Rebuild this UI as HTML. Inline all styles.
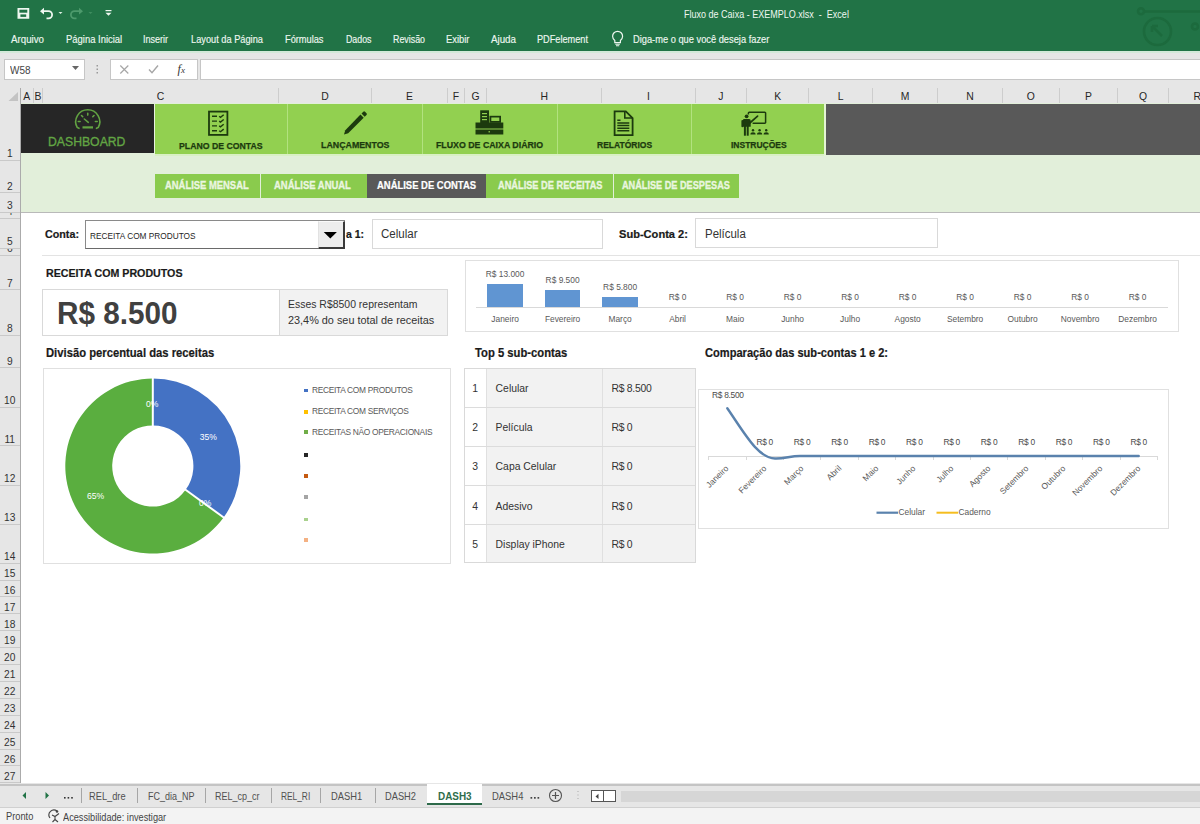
<!DOCTYPE html><html><head><meta charset="utf-8"><style>
*{margin:0;padding:0;box-sizing:border-box}
html,body{width:1200px;height:824px;overflow:hidden;background:#fff;font-family:"Liberation Sans",sans-serif}
.a{position:absolute}
.t{position:absolute;white-space:nowrap;line-height:1}
.b{font-weight:bold}
</style></head><body>
<div class="a" style="left:0px;top:0px;width:1200px;height:51px;background:#217346"></div>
<div class="a" style="left:0px;top:51px;width:1200px;height:2px;background:#d3e9d9"></div>
<svg class="a" style="left:0;top:0" width="130" height="30" viewBox="0 0 130 30">
<rect x="17.5" y="8" width="11.75" height="10.75" fill="#eef7f0"/><rect x="19.4" y="9.7" width="7.9" height="3" fill="#217346"/><rect x="20.4" y="14.4" width="5.8" height="2.5" fill="#217346"/>
<path d="M42 11.2h6.5a3.6 3.6 0 0 1 0 7.2h-2" fill="none" stroke="#eef7f0" stroke-width="1.8"/>
<path d="M40 11.2l4-3.4v6.8z" fill="#eef7f0"/>
<path d="M58.5 12l2 2 2-2z" fill="#dcefe2"/>
<path d="M81 11.2h-6.5a3.6 3.6 0 0 0 0 7.2h2" fill="none" stroke="#4d9a6c" stroke-width="1.8"/>
<path d="M83 11.2l-4-3.4v6.8z" fill="#4d9a6c"/>
<path d="M88.5 12l2 2 2-2z" fill="#3f8d5f"/>
<path d="M105.5 10.6h6" stroke="#eef7f0" stroke-width="1.2"/>
<path d="M105.5 12.8h6l-3 3z" fill="#eef7f0"/>
</svg>
<div class="t" style="left:684.00px;top:10.00px;font-size:10.32px;color:#eef7f0;transform:scaleX(0.8745);transform-origin:0 0;">Fluxo de Caixa - EXEMPLO.xlsx&nbsp; -&nbsp; Excel</div>
<svg class="a" style="left:1120px;top:0" width="80" height="51" viewBox="1120 0 80 51">
<g fill="none" stroke="#1c6a3d" stroke-width="2.6">
<circle cx="1157.5" cy="31.5" r="13.5"/>
<circle cx="1141" cy="11.3" r="3"/>
<path d="M1144 11.5H1200"/>
<circle cx="1195" cy="26.5" r="3"/>
<path d="M1152 26l10 10M1152 26h6M1152 26v6"/>
</g></svg>
<div class="t" style="left:10.70px;top:35.00px;font-size:10.32px;color:#eef7f0;transform:scaleX(0.9430);transform-origin:0 0;-webkit-text-stroke:0.15px">Arquivo</div>
<div class="t" style="left:65.50px;top:35.00px;font-size:10.32px;color:#eef7f0;transform:scaleX(0.9164);transform-origin:0 0;-webkit-text-stroke:0.15px">Página Inicial</div>
<div class="t" style="left:143.00px;top:35.00px;font-size:10.32px;color:#eef7f0;transform:scaleX(0.8720);transform-origin:0 0;-webkit-text-stroke:0.15px">Inserir</div>
<div class="t" style="left:190.50px;top:35.00px;font-size:10.32px;color:#eef7f0;transform:scaleX(0.8962);transform-origin:0 0;-webkit-text-stroke:0.15px">Layout da Página</div>
<div class="t" style="left:284.50px;top:35.00px;font-size:10.32px;color:#eef7f0;transform:scaleX(0.8951);transform-origin:0 0;-webkit-text-stroke:0.15px">Fórmulas</div>
<div class="t" style="left:345.50px;top:35.00px;font-size:10.32px;color:#eef7f0;transform:scaleX(0.8547);transform-origin:0 0;-webkit-text-stroke:0.15px">Dados</div>
<div class="t" style="left:393.00px;top:35.00px;font-size:10.32px;color:#eef7f0;transform:scaleX(0.8582);transform-origin:0 0;-webkit-text-stroke:0.15px">Revisão</div>
<div class="t" style="left:446.00px;top:35.00px;font-size:10.32px;color:#eef7f0;transform:scaleX(0.9105);transform-origin:0 0;-webkit-text-stroke:0.15px">Exibir</div>
<div class="t" style="left:491.00px;top:35.00px;font-size:10.32px;color:#eef7f0;transform:scaleX(0.9470);transform-origin:0 0;-webkit-text-stroke:0.15px">Ajuda</div>
<div class="t" style="left:537.30px;top:35.00px;font-size:10.32px;color:#eef7f0;transform:scaleX(0.8892);transform-origin:0 0;-webkit-text-stroke:0.15px">PDFelement</div>
<div class="t" style="left:632.60px;top:35.00px;font-size:10.32px;color:#eef7f0;transform:scaleX(0.9007);transform-origin:0 0;-webkit-text-stroke:0.15px">Diga-me o que você deseja fazer</div>
<svg class="a" style="left:608px;top:30px" width="20" height="18" viewBox="0 0 20 18">
<path d="M6.8 10.5c-1.4-1.2-2.2-2.6-2.2-4.2a5 5 0 0 1 10 0c0 1.6-.8 3-2.2 4.2v2.2h-5.6z" fill="none" stroke="#eef7f0" stroke-width="1.2"/>
<path d="M7.3 14.3h4.6M8 15.8h3.2" stroke="#eef7f0" stroke-width="1.1"/>
</svg>
<div class="a" style="left:0px;top:53px;width:1200px;height:35px;background:#e6e6e6"></div>
<div class="a" style="left:4px;top:58.9px;width:81px;height:21px;background:#fff;border:1px solid #c6c6c6"></div>
<div class="t" style="left:10.00px;top:65.00px;font-size:10.76px;color:#444;transform:scaleX(0.9270);transform-origin:0 0;">W58</div>
<svg class="a" style="left:72px;top:66px" width="8" height="5"><path d="M0 0h7l-3.5 4z" fill="#666"/></svg>
<svg class="a" style="left:95px;top:64px" width="5" height="11"><g fill="#9a9a9a"><rect x="1.5" y="1" width="1.5" height="1.5"/><rect x="1.5" y="4.5" width="1.5" height="1.5"/><rect x="1.5" y="8" width="1.5" height="1.5"/></g></svg>
<div class="a" style="left:109.5px;top:58.9px;width:88px;height:21px;background:#fff;border:1px solid #c6c6c6"></div>
<svg class="a" style="left:110px;top:60px" width="88" height="20" viewBox="110 60 88 20">
<path d="M120.3 65.5l8 8M128.3 65.5l-8 8" stroke="#a6a6a6" stroke-width="1.2"/>
<path d="M149 69.5l3 3.3 6-7.3" fill="none" stroke="#a6a6a6" stroke-width="1.4"/>
</svg>
<div class="t" style="left:177.60px;top:63.00px;font-size:12px;color:#333;font-family:'Liberation Serif',serif"><i>f</i><span style="font-size:9px"><i>x</i></span></div>
<div class="a" style="left:199.5px;top:58.9px;width:1001px;height:21px;background:#fff;border:1px solid #c6c6c6;border-right:none"></div>
<div class="a" style="left:0px;top:88px;width:1200px;height:15px;background:#e6e6e6"></div>
<div class="a" style="left:0px;top:102.8px;width:1200px;height:1px;background:#b0b0b0"></div>
<svg class="a" style="left:0;top:88px" width="20" height="15"><path d="M18 13V4L8.5 13z" fill="#c3c3c3"/></svg>
<div class="a" style="left:19.5px;top:88px;width:1px;height:15px;background:#ababab"></div>
<div class="a" style="left:33.1px;top:88px;width:1px;height:15px;background:#cdcdcd"></div>
<div class="t" style="left:-173.20px;width:400px;text-align:center;top:92.00px;font-size:10.4px;color:#262626;">A</div>
<div class="a" style="left:42.0px;top:88px;width:1px;height:15px;background:#cdcdcd"></div>
<div class="t" style="left:-161.95px;width:400px;text-align:center;top:92.00px;font-size:10.4px;color:#262626;">B</div>
<div class="a" style="left:278.0px;top:88px;width:1px;height:15px;background:#cdcdcd"></div>
<div class="t" style="left:-39.50px;width:400px;text-align:center;top:92.00px;font-size:10.4px;color:#262626;">C</div>
<div class="a" style="left:371.0px;top:88px;width:1px;height:15px;background:#cdcdcd"></div>
<div class="t" style="left:125.00px;width:400px;text-align:center;top:92.00px;font-size:10.4px;color:#262626;">D</div>
<div class="a" style="left:447.0px;top:88px;width:1px;height:15px;background:#cdcdcd"></div>
<div class="t" style="left:209.50px;width:400px;text-align:center;top:92.00px;font-size:10.4px;color:#262626;">E</div>
<div class="a" style="left:464.1px;top:88px;width:1px;height:15px;background:#cdcdcd"></div>
<div class="t" style="left:256.05px;width:400px;text-align:center;top:92.00px;font-size:10.4px;color:#262626;">F</div>
<div class="a" style="left:486.0px;top:88px;width:1px;height:15px;background:#cdcdcd"></div>
<div class="t" style="left:275.55px;width:400px;text-align:center;top:92.00px;font-size:10.4px;color:#262626;">G</div>
<div class="a" style="left:601.4px;top:88px;width:1px;height:15px;background:#cdcdcd"></div>
<div class="t" style="left:344.20px;width:400px;text-align:center;top:92.00px;font-size:10.4px;color:#262626;">H</div>
<div class="a" style="left:694.7px;top:88px;width:1px;height:15px;background:#cdcdcd"></div>
<div class="t" style="left:448.55px;width:400px;text-align:center;top:92.00px;font-size:10.4px;color:#262626;">I</div>
<div class="a" style="left:746.2px;top:88px;width:1px;height:15px;background:#cdcdcd"></div>
<div class="t" style="left:520.95px;width:400px;text-align:center;top:92.00px;font-size:10.4px;color:#262626;">J</div>
<div class="a" style="left:808.0px;top:88px;width:1px;height:15px;background:#cdcdcd"></div>
<div class="t" style="left:577.60px;width:400px;text-align:center;top:92.00px;font-size:10.4px;color:#262626;">K</div>
<div class="a" style="left:872.2px;top:88px;width:1px;height:15px;background:#cdcdcd"></div>
<div class="t" style="left:640.60px;width:400px;text-align:center;top:92.00px;font-size:10.4px;color:#262626;">L</div>
<div class="a" style="left:937.2px;top:88px;width:1px;height:15px;background:#cdcdcd"></div>
<div class="t" style="left:705.20px;width:400px;text-align:center;top:92.00px;font-size:10.4px;color:#262626;">M</div>
<div class="a" style="left:1002.0px;top:88px;width:1px;height:15px;background:#cdcdcd"></div>
<div class="t" style="left:770.10px;width:400px;text-align:center;top:92.00px;font-size:10.4px;color:#262626;">N</div>
<div class="a" style="left:1058.7px;top:88px;width:1px;height:15px;background:#cdcdcd"></div>
<div class="t" style="left:830.85px;width:400px;text-align:center;top:92.00px;font-size:10.4px;color:#262626;">O</div>
<div class="a" style="left:1117.0px;top:88px;width:1px;height:15px;background:#cdcdcd"></div>
<div class="t" style="left:888.35px;width:400px;text-align:center;top:92.00px;font-size:10.4px;color:#262626;">P</div>
<div class="a" style="left:1168.2px;top:88px;width:1px;height:15px;background:#cdcdcd"></div>
<div class="t" style="left:943.10px;width:400px;text-align:center;top:92.00px;font-size:10.4px;color:#262626;">Q</div>
<div class="a" style="left:1225.5px;top:88px;width:1px;height:15px;background:#cdcdcd"></div>
<div class="t" style="left:997.35px;width:400px;text-align:center;top:92.00px;font-size:10.4px;color:#262626;">R</div>
<div class="a" style="left:0px;top:103px;width:20px;height:680px;background:#e6e6e6"></div>
<div class="a" style="left:19.5px;top:103px;width:1px;height:680px;background:#ababab"></div>
<div class="a" style="left:0;top:103px;width:20px;height:680px;overflow:hidden">
<div class="a" style="left:0;top:0.50px;width:19.5px;height:57.60px;overflow:hidden;border-bottom:1px solid #c9c9c9">
<div class="t" style="left:0;width:19.5px;text-align:center;top:45.88px;font-size:10.2px;color:#333">1</div></div>
<div class="a" style="left:0;top:58.10px;width:19.5px;height:32.20px;overflow:hidden;border-bottom:1px solid #c9c9c9">
<div class="t" style="left:0;width:19.5px;text-align:center;top:20.48px;font-size:10.2px;color:#333">2</div></div>
<div class="a" style="left:0;top:90.30px;width:19.5px;height:19.50px;overflow:hidden;border-bottom:1px solid #c9c9c9">
<div class="t" style="left:0;width:19.5px;text-align:center;top:7.78px;font-size:10.2px;color:#333">3</div></div>
<div class="a" style="left:0;top:109.80px;width:19.5px;height:6.00px;overflow:hidden;border-bottom:1px solid #c9c9c9">
<div class="t" style="left:0;width:19.5px;text-align:center;top:-5.72px;font-size:10.2px;color:#333">4</div></div>
<div class="a" style="left:0;top:115.80px;width:19.5px;height:30.10px;overflow:hidden;border-bottom:1px solid #c9c9c9">
<div class="t" style="left:0;width:19.5px;text-align:center;top:18.38px;font-size:10.2px;color:#333">5</div></div>
<div class="a" style="left:0;top:145.90px;width:19.5px;height:6.90px;overflow:hidden;border-bottom:1px solid #c9c9c9">
<div class="t" style="left:0;width:19.5px;text-align:center;top:-4.82px;font-size:10.2px;color:#333">6</div></div>
<div class="a" style="left:0;top:152.80px;width:19.5px;height:34.60px;overflow:hidden;border-bottom:1px solid #c9c9c9">
<div class="t" style="left:0;width:19.5px;text-align:center;top:22.88px;font-size:10.2px;color:#333">7</div></div>
<div class="a" style="left:0;top:187.40px;width:19.5px;height:45.30px;overflow:hidden;border-bottom:1px solid #c9c9c9">
<div class="t" style="left:0;width:19.5px;text-align:center;top:33.58px;font-size:10.2px;color:#333">8</div></div>
<div class="a" style="left:0;top:232.70px;width:19.5px;height:32.60px;overflow:hidden;border-bottom:1px solid #c9c9c9">
<div class="t" style="left:0;width:19.5px;text-align:center;top:20.88px;font-size:10.2px;color:#333">9</div></div>
<div class="a" style="left:0;top:265.30px;width:19.5px;height:39.50px;overflow:hidden;border-bottom:1px solid #c9c9c9">
<div class="t" style="left:0;width:19.5px;text-align:center;top:27.78px;font-size:10.2px;color:#333">10</div></div>
<div class="a" style="left:0;top:304.80px;width:19.5px;height:38.70px;overflow:hidden;border-bottom:1px solid #c9c9c9">
<div class="t" style="left:0;width:19.5px;text-align:center;top:26.98px;font-size:10.2px;color:#333">11</div></div>
<div class="a" style="left:0;top:343.50px;width:19.5px;height:39.40px;overflow:hidden;border-bottom:1px solid #c9c9c9">
<div class="t" style="left:0;width:19.5px;text-align:center;top:27.68px;font-size:10.2px;color:#333">12</div></div>
<div class="a" style="left:0;top:382.90px;width:19.5px;height:39.10px;overflow:hidden;border-bottom:1px solid #c9c9c9">
<div class="t" style="left:0;width:19.5px;text-align:center;top:27.38px;font-size:10.2px;color:#333">13</div></div>
<div class="a" style="left:0;top:422.00px;width:19.5px;height:38.70px;overflow:hidden;border-bottom:1px solid #c9c9c9">
<div class="t" style="left:0;width:19.5px;text-align:center;top:26.98px;font-size:10.2px;color:#333">14</div></div>
<div class="a" style="left:0;top:460.70px;width:19.5px;height:16.90px;overflow:hidden;border-bottom:1px solid #c9c9c9">
<div class="t" style="left:0;width:19.5px;text-align:center;top:5.18px;font-size:10.2px;color:#333">15</div></div>
<div class="a" style="left:0;top:477.60px;width:19.5px;height:16.90px;overflow:hidden;border-bottom:1px solid #c9c9c9">
<div class="t" style="left:0;width:19.5px;text-align:center;top:5.18px;font-size:10.2px;color:#333">16</div></div>
<div class="a" style="left:0;top:494.50px;width:19.5px;height:16.90px;overflow:hidden;border-bottom:1px solid #c9c9c9">
<div class="t" style="left:0;width:19.5px;text-align:center;top:5.18px;font-size:10.2px;color:#333">17</div></div>
<div class="a" style="left:0;top:511.40px;width:19.5px;height:16.90px;overflow:hidden;border-bottom:1px solid #c9c9c9">
<div class="t" style="left:0;width:19.5px;text-align:center;top:5.18px;font-size:10.2px;color:#333">18</div></div>
<div class="a" style="left:0;top:528.30px;width:19.5px;height:16.90px;overflow:hidden;border-bottom:1px solid #c9c9c9">
<div class="t" style="left:0;width:19.5px;text-align:center;top:5.18px;font-size:10.2px;color:#333">19</div></div>
<div class="a" style="left:0;top:545.20px;width:19.5px;height:16.90px;overflow:hidden;border-bottom:1px solid #c9c9c9">
<div class="t" style="left:0;width:19.5px;text-align:center;top:5.18px;font-size:10.2px;color:#333">20</div></div>
<div class="a" style="left:0;top:562.10px;width:19.5px;height:16.90px;overflow:hidden;border-bottom:1px solid #c9c9c9">
<div class="t" style="left:0;width:19.5px;text-align:center;top:5.18px;font-size:10.2px;color:#333">21</div></div>
<div class="a" style="left:0;top:579.00px;width:19.5px;height:16.90px;overflow:hidden;border-bottom:1px solid #c9c9c9">
<div class="t" style="left:0;width:19.5px;text-align:center;top:5.18px;font-size:10.2px;color:#333">22</div></div>
<div class="a" style="left:0;top:595.90px;width:19.5px;height:16.90px;overflow:hidden;border-bottom:1px solid #c9c9c9">
<div class="t" style="left:0;width:19.5px;text-align:center;top:5.18px;font-size:10.2px;color:#333">23</div></div>
<div class="a" style="left:0;top:612.80px;width:19.5px;height:16.90px;overflow:hidden;border-bottom:1px solid #c9c9c9">
<div class="t" style="left:0;width:19.5px;text-align:center;top:5.18px;font-size:10.2px;color:#333">24</div></div>
<div class="a" style="left:0;top:629.70px;width:19.5px;height:16.90px;overflow:hidden;border-bottom:1px solid #c9c9c9">
<div class="t" style="left:0;width:19.5px;text-align:center;top:5.18px;font-size:10.2px;color:#333">25</div></div>
<div class="a" style="left:0;top:646.60px;width:19.5px;height:16.90px;overflow:hidden;border-bottom:1px solid #c9c9c9">
<div class="t" style="left:0;width:19.5px;text-align:center;top:5.18px;font-size:10.2px;color:#333">26</div></div>
<div class="a" style="left:0;top:663.50px;width:19.5px;height:16.90px;overflow:hidden;border-bottom:1px solid #c9c9c9">
<div class="t" style="left:0;width:19.5px;text-align:center;top:5.18px;font-size:10.2px;color:#333">27</div></div>
</div>
<div class="a" style="left:20.5px;top:103px;width:1179.5px;height:109.3px;background:#e2efda"></div>
<div class="a" style="left:20.5px;top:212px;width:1179.5px;height:1px;background:#b9b9b9"></div>
<div class="a" style="left:21px;top:103.8px;width:133px;height:49.7px;background:#262626"></div>
<div class="a" style="left:154px;top:103.5px;width:1px;height:51px;background:#e8f3df"></div>
<div class="a" style="left:155px;top:103.8px;width:669.3px;height:50.4px;background:#92d050"></div>
<div class="a" style="left:286.9px;top:103.5px;width:1.6px;height:51px;background:#b2e27f"></div>
<div class="a" style="left:421.5px;top:103.5px;width:1.6px;height:51px;background:#b2e27f"></div>
<div class="a" style="left:556.6px;top:103.5px;width:1.6px;height:51px;background:#b2e27f"></div>
<div class="a" style="left:690.8000000000001px;top:103.5px;width:1.6px;height:51px;background:#b2e27f"></div>
<div class="a" style="left:825.7px;top:103.8px;width:374.3px;height:51.6px;background:#595959"></div>
<div class="a" style="left:155px;top:154.2px;width:669.5px;height:1.8px;background:#d9f0c4"></div>
<div class="a" style="left:824.3px;top:103px;width:1.4px;height:53px;background:#e4f4d4"></div>
<svg class="a" style="left:60px;top:104px" width="60" height="30" viewBox="60 104 60 30">
<g fill="none" stroke="#62a342" stroke-width="1.6" stroke-linecap="round">
<path d="M79 128.3L77.2 127.4A12 12 0 1 1 98.3 127.4L96.5 128.3"/>
<path d="M78.3 121.5h1.8M97.2 121.5h-1.8M81.5 115.5l1.2 1.2M94 115.5l-1.2 1.2M87.75 113.3v1.8"/>
<path d="M84.3 119l4 3.3"/>
</g>
<rect x="82.5" y="126.3" width="10.5" height="2.2" fill="#62a342"/>
</svg>
<div class="t" style="left:48.30px;top:135.00px;font-size:13.23px;color:#62a544;transform:scaleX(0.9249);transform-origin:0 0;-webkit-text-stroke:0.35px">DASHBOARD</div>
<div class="t b" style="left:179.30px;top:141.00px;font-size:9.74px;color:#1c3a0e;transform:scaleX(0.8960);transform-origin:0 0;-webkit-text-stroke:0.25px">PLANO DE CONTAS</div>
<div class="t b" style="left:320.80px;top:141.00px;font-size:9.30px;color:#1c3a0e;transform:scaleX(0.9491);transform-origin:0 0;-webkit-text-stroke:0.25px">LANÇAMENTOS</div>
<div class="t b" style="left:436.00px;top:141.00px;font-size:9.30px;color:#1c3a0e;transform:scaleX(0.9457);transform-origin:0 0;-webkit-text-stroke:0.25px">FLUXO DE CAIXA DIÁRIO</div>
<div class="t b" style="left:597.10px;top:141.00px;font-size:8.72px;color:#1c3a0e;transform:scaleX(0.9749);transform-origin:0 0;-webkit-text-stroke:0.25px">RELATÓRIOS</div>
<div class="t b" style="left:730.60px;top:141.00px;font-size:8.72px;color:#1c3a0e;transform:scaleX(0.9742);transform-origin:0 0;-webkit-text-stroke:0.25px">INSTRUÇÕES</div>
<svg class="a" style="left:200px;top:105px" width="40" height="35" viewBox="200 105 40 35">
<rect x="209" y="111.6" width="18.4" height="23.3" fill="none" stroke="#1c3a0e" stroke-width="1.8"/>
<g stroke="#1c3a0e" stroke-width="1.4" fill="none">
<path d="M212 116.3h5M212 121.1h5M212 125.9h5M212 130.7h5"/>
<path d="M219.2 116.3l1.3 1 3.2-2.6M219.2 121.1l1.3 1 3.2-2.6M219.2 125.9l1.3 1 3.2-2.6M219.2 130.7l1.3 1 3.2-2.6"/>
</g></svg>
<svg class="a" style="left:335px;top:105px" width="40" height="35" viewBox="335 105 40 35">
<path d="M360.5 114.5l3.2 3.2-15.5 15.5-4.2 1.3 1.3-4.2z" fill="#1c3a0e"/>
<path d="M361.5 113.5l1.8-1.8a1.2 1.2 0 0 1 1.7 0l1.5 1.5a1.2 1.2 0 0 1 0 1.7l-1.8 1.8z" fill="#1c3a0e"/>
</svg>
<svg class="a" style="left:470px;top:105px" width="40" height="35" viewBox="470 105 40 35">
<g fill="#1c3a0e">
<rect x="480.2" y="110.3" width="8.8" height="13"/>
<rect x="489.5" y="115.8" width="11.5" height="7"/>
<rect x="475.5" y="122.5" width="27.8" height="6"/>
<rect x="475.5" y="129.5" width="27.8" height="5"/>
</g>
<g fill="#92d050">
<rect x="482" y="113" width="5" height="1.2"/><rect x="482" y="116" width="5" height="1.2"/><rect x="482" y="119" width="5" height="1.2"/>
<rect x="491.3" y="117.5" width="8" height="3.5"/>
<rect x="488.5" y="131.2" width="1.5" height="1.2"/>
</g></svg>
<svg class="a" style="left:605px;top:105px" width="40" height="35" viewBox="605 105 40 35">
<path d="M614.6 111.4h11.2l6.8 6.8v16.9h-18z" fill="none" stroke="#1c3a0e" stroke-width="1.8"/>
<path d="M624.8 111.5v6.5h7.2" fill="none" stroke="#1c3a0e" stroke-width="1.6"/>
<path d="M617.3 120.3h3.2M617.3 122.9h12M617.3 125.6h12M617.3 128.3h12M617.3 130.8h12" stroke="#1c3a0e" stroke-width="1.5"/>
</svg>
<svg class="a" style="left:738px;top:105px" width="34" height="35" viewBox="738 105 34 35">
<path d="M748.4 114.6v-1.6a0.8 0.8 0 0 1 0.8-0.8h15.6a0.8 0.8 0 0 1 0.8 0.8v9.4a0.8 0.8 0 0 1-0.8 0.8h-12.2" fill="none" stroke="#1c3a0e" stroke-width="1.5"/>
<g fill="#1c3a0e">
<circle cx="746.6" cy="116.3" r="1.9"/>
<path d="M744 119.1h5.2a1.5 1.5 0 0 1 1.5 1.5v6.2h-7.9v-6.2a1.5 1.5 0 0 1 1.2-1.5z"/>
<rect x="741.4" y="120" width="1.9" height="7.2" rx="0.9"/>
<rect x="743.9" y="126" width="2" height="9.7"/>
<rect x="746.7" y="126" width="2" height="9.7"/>
<circle cx="753" cy="130.2" r="1.2"/><circle cx="759.6" cy="130.2" r="1.2"/><circle cx="766.2" cy="130.2" r="1.2"/>
<path d="M750.4 134.6a2.6 2.3 0 0 1 5.2 0zM757 134.6a2.6 2.3 0 0 1 5.2 0zM763.6 134.6a2.6 2.3 0 0 1 5.2 0z"/>
</g>
<path d="M749.8 123l7.8-6.9" stroke="#1c3a0e" stroke-width="1.7" stroke-linecap="round"/>
</svg>
<div class="a" style="left:155px;top:173.5px;width:105px;height:24px;background:#8acb4d"></div>
<div class="a" style="left:261px;top:173.5px;width:105.6px;height:24px;background:#8acb4d"></div>
<div class="a" style="left:366.6px;top:173.5px;width:119px;height:24px;background:#595959"></div>
<div class="a" style="left:486px;top:173.5px;width:126.5px;height:24px;background:#8acb4d"></div>
<div class="a" style="left:613.5px;top:173.5px;width:125.1px;height:24px;background:#8acb4d"></div>
<div class="t b" style="left:165.20px;top:181.00px;font-size:10.03px;color:#eaf6e0;transform:scaleX(0.9400);transform-origin:0 0;-webkit-text-stroke:0.3px">ANÁLISE MENSAL</div>
<div class="t b" style="left:274.00px;top:181.00px;font-size:10.03px;color:#eaf6e0;transform:scaleX(0.9445);transform-origin:0 0;-webkit-text-stroke:0.3px">ANÁLISE ANUAL</div>
<div class="t b" style="left:376.80px;top:181.00px;font-size:10.03px;color:#ffffff;transform:scaleX(0.9436);transform-origin:0 0;-webkit-text-stroke:0.2px">ANÁLISE DE CONTAS</div>
<div class="t b" style="left:497.80px;top:181.00px;font-size:10.03px;color:#eaf6e0;transform:scaleX(0.9217);transform-origin:0 0;-webkit-text-stroke:0.3px">ANÁLISE DE RECEITAS</div>
<div class="t b" style="left:621.70px;top:181.00px;font-size:10.03px;color:#eaf6e0;transform:scaleX(0.9142);transform-origin:0 0;-webkit-text-stroke:0.3px">ANÁLISE DE DESPESAS</div>
<div class="t b" style="left:45.20px;top:229.00px;font-size:11.48px;color:#1a1a1a;transform:scaleX(0.9353);transform-origin:0 0;-webkit-text-stroke:0.2px">Conta:</div>
<div class="a" style="left:85.4px;top:220.3px;width:259.6px;height:28.3px;background:#fff;border:1px solid #8a8a8a;border-bottom:1.5px solid #6a6a6a"></div>
<div class="a" style="left:317.6px;top:221.3px;width:27.4px;height:27.3px;background:#ededed;border-left:1px solid #e2e2e2;border-top:1px solid #fafafa;border-right:2px solid #3a3a3a;border-bottom:2px solid #3a3a3a"></div>
<svg class="a" style="left:322px;top:230px" width="16" height="10"><path d="M1.75 1.9h13.15l-6.6 6.7z" fill="#000"/></svg>
<div class="t" style="left:90.00px;top:232.00px;font-size:9.16px;color:#262626;transform:scaleX(0.9051);transform-origin:0 0;">RECEITA COM PRODUTOS</div>
<div class="t b" style="left:345.90px;top:229.00px;font-size:10.83px;color:#1a1a1a;transform:scaleX(0.9701);transform-origin:0 0;-webkit-text-stroke:0.2px">a 1:</div>
<div class="a" style="left:371.5px;top:218.5px;width:231.3px;height:30px;background:#fff;border:1px solid #d9d9d9"></div>
<div class="t" style="left:381.40px;top:228.00px;font-size:12.21px;color:#333;transform:scaleX(0.9462);transform-origin:0 0;">Celular</div>
<div class="t b" style="left:618.70px;top:230.00px;font-size:10.32px;color:#1a1a1a;transform:scaleX(1.0746);transform-origin:0 0;-webkit-text-stroke:0.2px">Sub-Conta 2:</div>
<div class="a" style="left:695.2px;top:218px;width:242.4px;height:30.3px;background:#fff;border:1px solid #d9d9d9"></div>
<div class="t" style="left:704.70px;top:228.00px;font-size:12.21px;color:#333;transform:scaleX(0.9392);transform-origin:0 0;">Película</div>
<div class="a" style="left:42px;top:255px;width:1158px;height:1px;background:#e3e3e3"></div>
<div class="t b" style="left:45.60px;top:268.00px;font-size:11.34px;color:#1a1a1a;transform:scaleX(0.9402);transform-origin:0 0;-webkit-text-stroke:0.2px">RECEITA COM PRODUTOS</div>
<div class="a" style="left:42px;top:289.4px;width:406px;height:46.4px;background:#fff;border:1px solid #d9d9d9"></div>
<div class="a" style="left:279px;top:290.4px;width:168px;height:44.4px;background:#f2f2f2;border-left:1px solid #d9d9d9"></div>
<div class="t b" style="left:57.20px;top:299.00px;font-size:30.96px;color:#404040;transform:scaleX(0.9597);transform-origin:0 0;">R$ 8.500</div>
<div class="t" style="left:287.80px;top:299.00px;font-size:11.05px;color:#333;transform:scaleX(0.9457);transform-origin:0 0;">Esses R$8500 representam</div>
<div class="t" style="left:287.80px;top:315.00px;font-size:10.61px;color:#333;transform:scaleX(1.0242);transform-origin:0 0;">23,4% do seu total de receitas</div>
<div class="a" style="left:465.4px;top:259.8px;width:713.5px;height:72.5px;background:#fff;border:1px solid #e0e0e0"></div>
<div class="a" style="left:476px;top:307px;width:692px;height:1px;background:#d9d9d9"></div>
<div class="a" style="left:487.35px;top:284.151px;width:35.5px;height:23.049px;background:#6095d2"></div>
<div class="t" style="left:305.10px;width:400px;text-align:center;top:270.00px;font-size:8.4px;color:#595959;">R$ 13.000</div>
<div class="t" style="left:305.10px;width:400px;text-align:center;top:315.00px;font-size:8.4px;color:#595959;">Janeiro</div>
<div class="a" style="left:544.85px;top:290.3565px;width:35.5px;height:16.8435px;background:#6095d2"></div>
<div class="t" style="left:362.60px;width:400px;text-align:center;top:276.00px;font-size:8.4px;color:#595959;">R$ 9.500</div>
<div class="t" style="left:362.60px;width:400px;text-align:center;top:315.00px;font-size:8.4px;color:#595959;">Fevereiro</div>
<div class="a" style="left:602.35px;top:296.9166px;width:35.5px;height:10.2834px;background:#6095d2"></div>
<div class="t" style="left:420.10px;width:400px;text-align:center;top:283.00px;font-size:8.4px;color:#595959;">R$ 5.800</div>
<div class="t" style="left:420.10px;width:400px;text-align:center;top:315.00px;font-size:8.4px;color:#595959;">Março</div>
<div class="t" style="left:477.60px;width:400px;text-align:center;top:293.00px;font-size:8.4px;color:#595959;">R$ 0</div>
<div class="t" style="left:477.60px;width:400px;text-align:center;top:315.00px;font-size:8.4px;color:#595959;">Abril</div>
<div class="t" style="left:535.10px;width:400px;text-align:center;top:293.00px;font-size:8.4px;color:#595959;">R$ 0</div>
<div class="t" style="left:535.10px;width:400px;text-align:center;top:315.00px;font-size:8.4px;color:#595959;">Maio</div>
<div class="t" style="left:592.60px;width:400px;text-align:center;top:293.00px;font-size:8.4px;color:#595959;">R$ 0</div>
<div class="t" style="left:592.60px;width:400px;text-align:center;top:315.00px;font-size:8.4px;color:#595959;">Junho</div>
<div class="t" style="left:650.10px;width:400px;text-align:center;top:293.00px;font-size:8.4px;color:#595959;">R$ 0</div>
<div class="t" style="left:650.10px;width:400px;text-align:center;top:315.00px;font-size:8.4px;color:#595959;">Julho</div>
<div class="t" style="left:707.60px;width:400px;text-align:center;top:293.00px;font-size:8.4px;color:#595959;">R$ 0</div>
<div class="t" style="left:707.60px;width:400px;text-align:center;top:315.00px;font-size:8.4px;color:#595959;">Agosto</div>
<div class="t" style="left:765.10px;width:400px;text-align:center;top:293.00px;font-size:8.4px;color:#595959;">R$ 0</div>
<div class="t" style="left:765.10px;width:400px;text-align:center;top:315.00px;font-size:8.4px;color:#595959;">Setembro</div>
<div class="t" style="left:822.60px;width:400px;text-align:center;top:293.00px;font-size:8.4px;color:#595959;">R$ 0</div>
<div class="t" style="left:822.60px;width:400px;text-align:center;top:315.00px;font-size:8.4px;color:#595959;">Outubro</div>
<div class="t" style="left:880.10px;width:400px;text-align:center;top:293.00px;font-size:8.4px;color:#595959;">R$ 0</div>
<div class="t" style="left:880.10px;width:400px;text-align:center;top:315.00px;font-size:8.4px;color:#595959;">Novembro</div>
<div class="t" style="left:937.60px;width:400px;text-align:center;top:293.00px;font-size:8.4px;color:#595959;">R$ 0</div>
<div class="t" style="left:937.60px;width:400px;text-align:center;top:315.00px;font-size:8.4px;color:#595959;">Dezembro</div>
<div class="t b" style="left:45.50px;top:347.00px;font-size:11.99px;color:#1a1a1a;transform:scaleX(0.9384);transform-origin:0 0;-webkit-text-stroke:0.2px">Divisão percentual das receitas</div>
<div class="t b" style="left:474.70px;top:347.00px;font-size:11.99px;color:#1a1a1a;transform:scaleX(0.9382);transform-origin:0 0;-webkit-text-stroke:0.2px">Top 5 sub-contas</div>
<div class="t b" style="left:704.70px;top:347.00px;font-size:11.99px;color:#1a1a1a;transform:scaleX(0.9251);transform-origin:0 0;-webkit-text-stroke:0.2px">Comparação das sub-contas 1 e 2:</div>
<div class="a" style="left:42.5px;top:367.6px;width:408px;height:196px;background:#fff;border:1px solid #e0e0e0"></div>
<svg class="a" style="left:0;top:0" width="460" height="570" viewBox="0 0 460 570"><path d="M152.80 378.50A87.5 87.5 0 0 1 223.59 517.43L185.65 489.86A40.6 40.6 0 0 0 152.80 425.40z" fill="#4472c4"/><path d="M223.59 517.43A87.5 87.5 0 1 1 152.80 378.50L152.80 425.40A40.6 40.6 0 1 0 185.65 489.86z" fill="#5aae3f"/><path d="M152.80 426.40L152.80 377.50" stroke="#fff" stroke-width="2"/><path d="M184.84 489.28L224.40 518.02" stroke="#fff" stroke-width="2"/></svg>
<div class="t" style="left:-47.80px;width:400px;text-align:center;top:400.00px;font-size:8.6px;color:#fff;">0%</div>
<div class="t" style="left:8.40px;width:400px;text-align:center;top:433.00px;font-size:8.6px;color:#fff;">35%</div>
<div class="t" style="left:5.30px;width:400px;text-align:center;top:499.00px;font-size:8.6px;color:#fff;">0%</div>
<div class="t" style="left:-104.40px;width:400px;text-align:center;top:492.00px;font-size:8.6px;color:#fff;">65%</div>
<div class="a" style="left:304.3px;top:388.5px;width:3.6px;height:3.6px;background:#4472c4"></div>
<div class="t" style="left:311.90px;top:386.00px;font-size:8.4px;color:#595959;letter-spacing:-0.3px">RECEITA COM PRODUTOS</div>
<div class="a" style="left:304.3px;top:410.09999999999997px;width:3.6px;height:3.6px;background:#ffc000"></div>
<div class="t" style="left:311.90px;top:407.00px;font-size:8.4px;color:#595959;letter-spacing:-0.3px">RECEITA COM SERVIÇOS</div>
<div class="a" style="left:304.3px;top:430.4px;width:3.6px;height:3.6px;background:#70ad47"></div>
<div class="t" style="left:311.90px;top:428.00px;font-size:8.4px;color:#595959;letter-spacing:-0.3px">RECEITAS NÃO OPERACIONAIS</div>
<div class="a" style="left:304.3px;top:453.0px;width:3.6px;height:3.6px;background:#262626"></div>
<div class="a" style="left:304.3px;top:474.2px;width:3.6px;height:3.6px;background:#c55a11"></div>
<div class="a" style="left:304.3px;top:495.4px;width:3.6px;height:3.6px;background:#a5a5a5"></div>
<div class="a" style="left:304.3px;top:517.5px;width:3.6px;height:3.6px;background:#a9d18e"></div>
<div class="a" style="left:304.3px;top:538.2px;width:3.6px;height:3.6px;background:#f4b183"></div>
<div class="a" style="left:464.4px;top:367.6px;width:231.2px;height:195.6px;background:#f2f2f2;border:1px solid #d9d9d9"></div>
<div class="a" style="left:465.4px;top:368.6px;width:20.2px;height:193.6px;background:#fff"></div>
<div class="a" style="left:485.6px;top:368.6px;width:1px;height:193.6px;background:#e0e0e0"></div>
<div class="a" style="left:601.5px;top:368.6px;width:1px;height:193.6px;background:#e0e0e0"></div>
<div class="t" style="left:472.30px;top:384.00px;font-size:10.4px;color:#333;">1</div>
<div class="t" style="left:495.60px;top:384.00px;font-size:10.4px;color:#333;">Celular</div>
<div class="t" style="left:611.60px;top:384.00px;font-size:10.4px;color:#333;letter-spacing:-0.3px">R$ 8.500</div>
<div class="a" style="left:465.4px;top:406.9px;width:229.2px;height:1px;background:#dcdcdc"></div>
<div class="t" style="left:472.30px;top:423.00px;font-size:10.4px;color:#333;">2</div>
<div class="t" style="left:495.60px;top:423.00px;font-size:10.4px;color:#333;">Película</div>
<div class="t" style="left:611.60px;top:423.00px;font-size:10.4px;color:#333;letter-spacing:-0.3px">R$ 0</div>
<div class="a" style="left:465.4px;top:445.7px;width:229.2px;height:1px;background:#dcdcdc"></div>
<div class="t" style="left:472.30px;top:462.00px;font-size:10.4px;color:#333;">3</div>
<div class="t" style="left:495.60px;top:462.00px;font-size:10.4px;color:#333;">Capa Celular</div>
<div class="t" style="left:611.60px;top:462.00px;font-size:10.4px;color:#333;letter-spacing:-0.3px">R$ 0</div>
<div class="a" style="left:465.4px;top:484.9px;width:229.2px;height:1px;background:#dcdcdc"></div>
<div class="t" style="left:472.30px;top:502.00px;font-size:10.4px;color:#333;">4</div>
<div class="t" style="left:495.60px;top:502.00px;font-size:10.4px;color:#333;">Adesivo</div>
<div class="t" style="left:611.60px;top:502.00px;font-size:10.4px;color:#333;letter-spacing:-0.3px">R$ 0</div>
<div class="a" style="left:465.4px;top:524.0px;width:229.2px;height:1px;background:#dcdcdc"></div>
<div class="t" style="left:472.30px;top:540.00px;font-size:10.4px;color:#333;">5</div>
<div class="t" style="left:495.60px;top:540.00px;font-size:10.4px;color:#333;">Display iPhone</div>
<div class="t" style="left:611.60px;top:540.00px;font-size:10.4px;color:#333;letter-spacing:-0.3px">R$ 0</div>
<div class="a" style="left:697.8px;top:388.6px;width:471.5px;height:140.5px;background:#fff;border:1px solid #e0e0e0"></div>
<div class="a" style="left:708.4px;top:455.5px;width:449px;height:1px;background:#d9d9d9"></div>
<div class="a" style="left:708.0999999999999px;top:455.5px;width:1px;height:4px;background:#d9d9d9"></div>
<div class="a" style="left:745.4999999999999px;top:455.5px;width:1px;height:4px;background:#d9d9d9"></div>
<div class="a" style="left:782.8999999999999px;top:455.5px;width:1px;height:4px;background:#d9d9d9"></div>
<div class="a" style="left:820.3px;top:455.5px;width:1px;height:4px;background:#d9d9d9"></div>
<div class="a" style="left:857.6999999999999px;top:455.5px;width:1px;height:4px;background:#d9d9d9"></div>
<div class="a" style="left:895.0999999999999px;top:455.5px;width:1px;height:4px;background:#d9d9d9"></div>
<div class="a" style="left:932.4999999999999px;top:455.5px;width:1px;height:4px;background:#d9d9d9"></div>
<div class="a" style="left:969.8999999999999px;top:455.5px;width:1px;height:4px;background:#d9d9d9"></div>
<div class="a" style="left:1007.3px;top:455.5px;width:1px;height:4px;background:#d9d9d9"></div>
<div class="a" style="left:1044.6999999999998px;top:455.5px;width:1px;height:4px;background:#d9d9d9"></div>
<div class="a" style="left:1082.1px;top:455.5px;width:1px;height:4px;background:#d9d9d9"></div>
<div class="a" style="left:1119.5px;top:455.5px;width:1px;height:4px;background:#d9d9d9"></div>
<div class="a" style="left:1156.8999999999999px;top:455.5px;width:1px;height:4px;background:#d9d9d9"></div>
<svg class="a" style="left:690px;top:380px" width="480" height="160" viewBox="690 380 480 160">
<path d="M727.3 408.2C745 434 758 458 775 458.5C785 458.8 790 456 800 456H1138.7" fill="none" stroke="#5a82ad" stroke-width="2.4" stroke-linecap="round"/>
<path d="M876.5 512.7h21.6" stroke="#5a82ad" stroke-width="2.2"/>
<path d="M936.5 512.7h21.6" stroke="#f5bd1f" stroke-width="2"/>
</svg>
<div class="t" style="left:527.90px;width:400px;text-align:center;top:391.00px;font-size:8.4px;color:#4a4a4a;letter-spacing:-0.3px">R$ 8.500</div>
<div class="t" style="left:564.70px;width:400px;text-align:center;top:438.00px;font-size:8.4px;color:#4a4a4a;letter-spacing:-0.3px">R$ 0</div>
<div class="t" style="left:602.10px;width:400px;text-align:center;top:438.00px;font-size:8.4px;color:#4a4a4a;letter-spacing:-0.3px">R$ 0</div>
<div class="t" style="left:639.50px;width:400px;text-align:center;top:438.00px;font-size:8.4px;color:#4a4a4a;letter-spacing:-0.3px">R$ 0</div>
<div class="t" style="left:676.90px;width:400px;text-align:center;top:438.00px;font-size:8.4px;color:#4a4a4a;letter-spacing:-0.3px">R$ 0</div>
<div class="t" style="left:714.30px;width:400px;text-align:center;top:438.00px;font-size:8.4px;color:#4a4a4a;letter-spacing:-0.3px">R$ 0</div>
<div class="t" style="left:751.70px;width:400px;text-align:center;top:438.00px;font-size:8.4px;color:#4a4a4a;letter-spacing:-0.3px">R$ 0</div>
<div class="t" style="left:789.10px;width:400px;text-align:center;top:438.00px;font-size:8.4px;color:#4a4a4a;letter-spacing:-0.3px">R$ 0</div>
<div class="t" style="left:826.50px;width:400px;text-align:center;top:438.00px;font-size:8.4px;color:#4a4a4a;letter-spacing:-0.3px">R$ 0</div>
<div class="t" style="left:863.90px;width:400px;text-align:center;top:438.00px;font-size:8.4px;color:#4a4a4a;letter-spacing:-0.3px">R$ 0</div>
<div class="t" style="left:901.30px;width:400px;text-align:center;top:438.00px;font-size:8.4px;color:#4a4a4a;letter-spacing:-0.3px">R$ 0</div>
<div class="t" style="left:938.70px;width:400px;text-align:center;top:438.00px;font-size:8.4px;color:#4a4a4a;letter-spacing:-0.3px">R$ 0</div>
<div class="t" style="left:524.30px;top:463.50px;width:200px;text-align:right;font-size:8.4px;color:#595959;transform:rotate(-45deg);transform-origin:100% 0">Janeiro</div>
<div class="t" style="left:561.70px;top:463.50px;width:200px;text-align:right;font-size:8.4px;color:#595959;transform:rotate(-45deg);transform-origin:100% 0">Fevereiro</div>
<div class="t" style="left:599.10px;top:463.50px;width:200px;text-align:right;font-size:8.4px;color:#595959;transform:rotate(-45deg);transform-origin:100% 0">Março</div>
<div class="t" style="left:636.50px;top:463.50px;width:200px;text-align:right;font-size:8.4px;color:#595959;transform:rotate(-45deg);transform-origin:100% 0">Abril</div>
<div class="t" style="left:673.90px;top:463.50px;width:200px;text-align:right;font-size:8.4px;color:#595959;transform:rotate(-45deg);transform-origin:100% 0">Maio</div>
<div class="t" style="left:711.30px;top:463.50px;width:200px;text-align:right;font-size:8.4px;color:#595959;transform:rotate(-45deg);transform-origin:100% 0">Junho</div>
<div class="t" style="left:748.70px;top:463.50px;width:200px;text-align:right;font-size:8.4px;color:#595959;transform:rotate(-45deg);transform-origin:100% 0">Julho</div>
<div class="t" style="left:786.10px;top:463.50px;width:200px;text-align:right;font-size:8.4px;color:#595959;transform:rotate(-45deg);transform-origin:100% 0">Agosto</div>
<div class="t" style="left:823.50px;top:463.50px;width:200px;text-align:right;font-size:8.4px;color:#595959;transform:rotate(-45deg);transform-origin:100% 0">Setembro</div>
<div class="t" style="left:860.90px;top:463.50px;width:200px;text-align:right;font-size:8.4px;color:#595959;transform:rotate(-45deg);transform-origin:100% 0">Outubro</div>
<div class="t" style="left:898.30px;top:463.50px;width:200px;text-align:right;font-size:8.4px;color:#595959;transform:rotate(-45deg);transform-origin:100% 0">Novembro</div>
<div class="t" style="left:935.70px;top:463.50px;width:200px;text-align:right;font-size:8.4px;color:#595959;transform:rotate(-45deg);transform-origin:100% 0">Dezembro</div>
<div class="t" style="left:898.50px;top:508.00px;font-size:8.4px;color:#595959;">Celular</div>
<div class="t" style="left:958.50px;top:508.00px;font-size:8.4px;color:#595959;">Caderno</div>
<div class="a" style="left:0px;top:783px;width:1200px;height:24px;background:#e6e6e6"></div>
<div class="a" style="left:0px;top:784.2px;width:1200px;height:1.4px;background:#c4c4c4"></div>
<div class="a" style="left:20.5px;top:772px;width:1179.5px;height:11px;background:#fff"></div>
<svg class="a" style="left:0;top:784px" width="80" height="22"><path d="M26 8v7l-3.5-3.5z" fill="#217346"/><path d="M45.5 8v7l3.5-3.5z" fill="#217346"/><g fill="#333"><rect x="64" y="13" width="1.6" height="1.6"/><rect x="67.6" y="13" width="1.6" height="1.6"/><rect x="71.2" y="13" width="1.6" height="1.6"/></g></svg>
<div class="a" style="left:80.5px;top:788px;width:1px;height:15px;background:#a6a6a6"></div>
<div class="a" style="left:136.8px;top:788px;width:1px;height:15px;background:#a6a6a6"></div>
<div class="a" style="left:205.3px;top:788px;width:1px;height:15px;background:#a6a6a6"></div>
<div class="a" style="left:270.7px;top:788px;width:1px;height:15px;background:#a6a6a6"></div>
<div class="a" style="left:320.3px;top:788px;width:1px;height:15px;background:#a6a6a6"></div>
<div class="a" style="left:375px;top:788px;width:1px;height:15px;background:#a6a6a6"></div>
<div class="t" style="left:89.30px;top:792.00px;font-size:10.47px;color:#505050;transform:scaleX(0.8861);transform-origin:0 0;">REL_dre</div>
<div class="t" style="left:147.50px;top:792.00px;font-size:10.47px;color:#505050;transform:scaleX(0.8578);transform-origin:0 0;">FC_dia_NP</div>
<div class="t" style="left:214.70px;top:792.00px;font-size:10.47px;color:#505050;transform:scaleX(0.8596);transform-origin:0 0;">REL_cp_cr</div>
<div class="t" style="left:280.80px;top:792.00px;font-size:10.47px;color:#505050;transform:scaleX(0.7970);transform-origin:0 0;">REL_RI</div>
<div class="t" style="left:330.80px;top:792.00px;font-size:10.47px;color:#505050;transform:scaleX(0.8940);transform-origin:0 0;">DASH1</div>
<div class="t" style="left:384.80px;top:792.00px;font-size:10.47px;color:#505050;transform:scaleX(0.8854);transform-origin:0 0;">DASH2</div>
<div class="t" style="left:491.60px;top:792.00px;font-size:10.47px;color:#505050;transform:scaleX(0.8997);transform-origin:0 0;">DASH4</div>
<div class="a" style="left:427.4px;top:783.5px;width:54.6px;height:21px;background:#fff"></div>
<div class="a" style="left:427.4px;top:802.6px;width:54.6px;height:2px;background:#2d6a4a"></div>
<div class="t b" style="left:437.60px;top:791.00px;font-size:11.05px;color:#2f6e4c;transform:scaleX(0.8973);transform-origin:0 0;">DASH3</div>
<svg class="a" style="left:525px;top:784px" width="95" height="22"><g fill="#444"><rect x="5.5" y="13" width="1.7" height="1.7"/><rect x="9" y="13" width="1.7" height="1.7"/><rect x="12.5" y="13" width="1.7" height="1.7"/></g><circle cx="30.5" cy="11.5" r="6" fill="none" stroke="#555" stroke-width="1.1"/><path d="M27 11.5h7M30.5 8v7" stroke="#555" stroke-width="1.2"/><g fill="#aaa"><rect x="52.5" y="7" width="1" height="1"/><rect x="52.5" y="10.5" width="1" height="1"/><rect x="52.5" y="14" width="1" height="1"/></g></svg>
<div class="a" style="left:621px;top:790.5px;width:579px;height:11px;background:#d6d6d6"></div>
<div class="a" style="left:591.2px;top:790.2px;width:25.3px;height:11.5px;background:#fff;border:1px solid #555"></div>
<div class="a" style="left:602.6px;top:790.2px;width:1.2px;height:11.5px;background:#555"></div>
<svg class="a" style="left:591px;top:790px" width="12" height="12"><path d="M7.5 3.8v5.2l-3-2.6z" fill="#444"/></svg>
<div class="a" style="left:0px;top:807px;width:1200px;height:17px;background:#f3f3f3"></div>
<div class="a" style="left:0px;top:806.5px;width:1200px;height:1px;background:#d0d0d0"></div>
<div class="t" style="left:5.90px;top:812.00px;font-size:10.17px;color:#444;transform:scaleX(0.9141);transform-origin:0 0;">Pronto</div>
<svg class="a" style="left:47px;top:809px" width="16" height="14"><g fill="none" stroke="#444" stroke-width="1.1"><path d="M3 9a5 5 0 0 1 7-7"/><path d="M5 6l3 1.5 4-3M8 7.5v3l-2.5 2.5M8 10.5l3 2.5"/></g><circle cx="10" cy="2.5" r="1.3" fill="#444"/></svg>
<div class="t" style="left:62.70px;top:812.00px;font-size:11.19px;color:#444;transform:scaleX(0.8212);transform-origin:0 0;">Acessibilidade: investigar</div>
</body></html>
